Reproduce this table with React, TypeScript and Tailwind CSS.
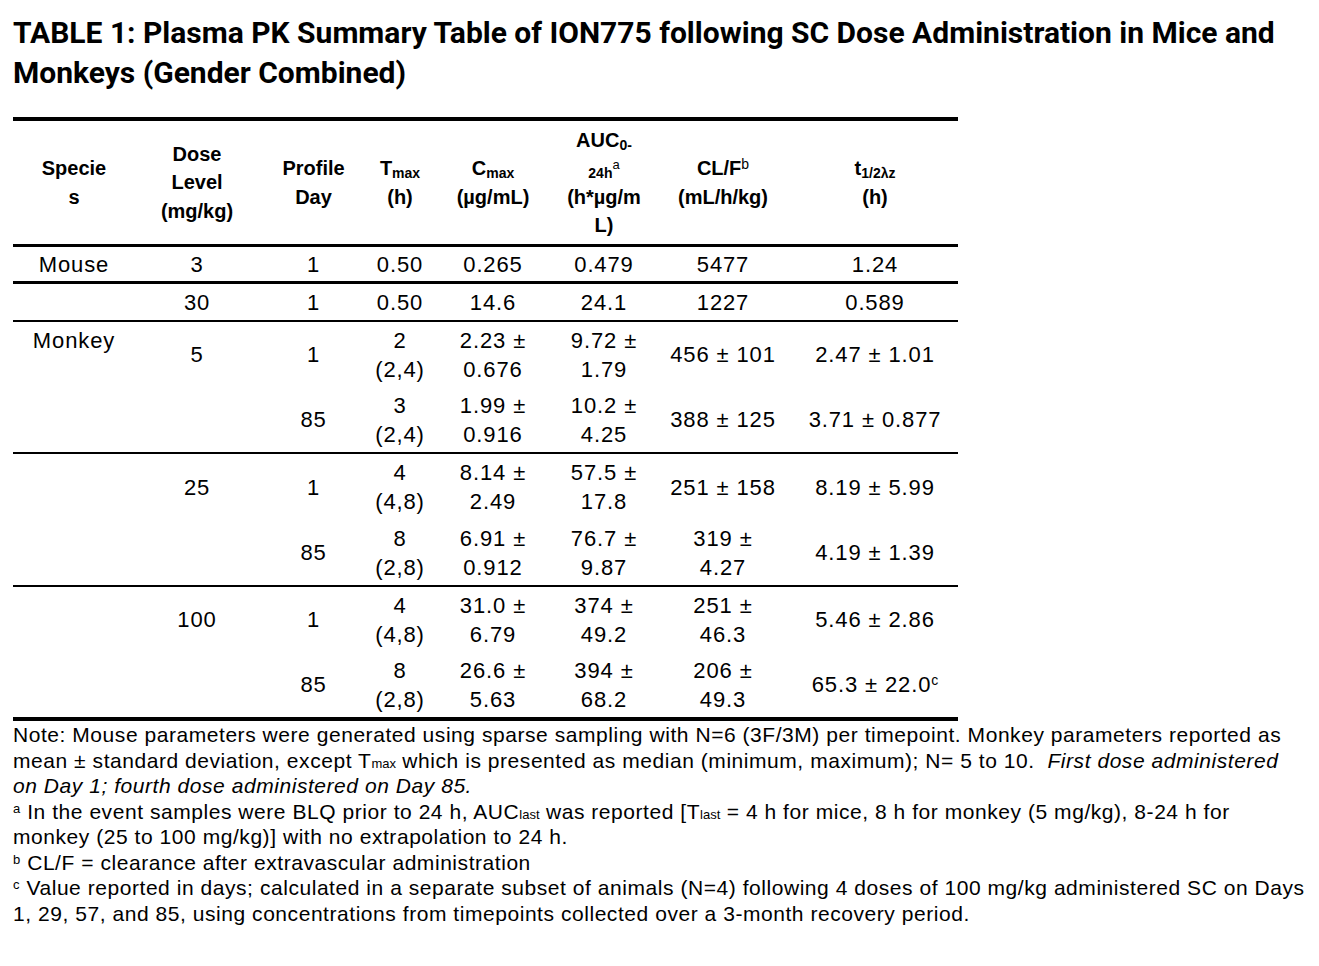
import React from "react";

const cols = "grid grid-cols-[122px_124px_109px_64px_122px_100px_138px_166px]";

type Row = {
  cells: React.ReactNode[];
  h: string;
  border: string;
  topFirst?: boolean;
};

const two = (a: string, b: string) => (
  <>
    {a}
    <br />
    {b}
  </>
);

const rows: Row[] = [
  { cells: ["Mouse", "3", "1", "0.50", "0.265", "0.479", "5477", "1.24"], h: "h-[37px]", border: "border-b-[3px]" },
  { cells: ["", "30", "1", "0.50", "14.6", "24.1", "1227", "0.589"], h: "h-[38px]", border: "border-b-2" },
  {
    cells: ["Monkey", "5", "1", two("2", "(2,4)"), two("2.23 ±", "0.676"), two("9.72 ±", "1.79"), "456 ± 101", "2.47 ± 1.01"],
    h: "h-[65px]",
    border: "",
    topFirst: true,
  },
  {
    cells: ["", "", "85", two("3", "(2,4)"), two("1.99 ±", "0.916"), two("10.2 ±", "4.25"), "388 ± 125", "3.71 ± 0.877"],
    h: "h-[67px]",
    border: "border-b-2",
  },
  {
    cells: ["", "25", "1", two("4", "(4,8)"), two("8.14 ±", "2.49"), two("57.5 ±", "17.8"), "251 ± 158", "8.19 ± 5.99"],
    h: "h-[66px]",
    border: "",
  },
  {
    cells: ["", "", "85", two("8", "(2,8)"), two("6.91 ±", "0.912"), two("76.7 ±", "9.87"), two("319 ±", "4.27"), "4.19 ± 1.39"],
    h: "h-[67px]",
    border: "border-b-2",
  },
  {
    cells: ["", "100", "1", two("4", "(4,8)"), two("31.0 ±", "6.79"), two("374 ±", "49.2"), two("251 ±", "46.3"), "5.46 ± 2.86"],
    h: "h-[65px]",
    border: "",
  },
  {
    cells: [
      "",
      "",
      "85",
      two("8", "(2,8)"),
      two("26.6 ±", "5.63"),
      two("394 ±", "68.2"),
      two("206 ±", "49.3"),
      <>
        65.3 ± 22.0<span className="relative -top-[7px] text-[14px] leading-none tracking-normal">c</span>
      </>,
    ],
    h: "h-[69px]",
    border: "border-b-4",
  },
];

const Sub = ({ children }: { children: React.ReactNode }) => (
  <span className="relative top-[3px] text-[14px] font-bold leading-none tracking-normal">{children}</span>
);

const Sm = ({ children }: { children: React.ReactNode }) => (
  <span className="text-[13px] leading-none tracking-normal">{children}</span>
);

const Sup = ({ children }: { children: React.ReactNode }) => (
  <span className="relative -top-[6px] text-[13px] leading-none">{children}</span>
);

export default function App() {
  return (
    <div className="min-h-[966px] w-[1319px] bg-white pl-[13px] pt-[13px] text-black font-['Liberation_Sans',Arial,sans-serif]">
      <h1 className="font-['Roboto',sans-serif] text-[30px] font-bold leading-[40px] whitespace-nowrap">
        <div>TABLE 1: Plasma PK Summary Table of ION775 following SC Dose Administration in Mice and</div>
        <div>Monkeys (Gender Combined)</div>
      </h1>

      <div className="mt-[24px] w-[945px] border-t-4 border-black">
        {/* header */}
        <div className={`${cols} h-[126px] border-b-[3px] border-black text-center text-[20px] font-bold leading-[28.5px]`}>
          <div className="flex items-center justify-center">
            <div>
              Specie
              <br />s
            </div>
          </div>
          <div className="flex items-center justify-center">
            <div>
              Dose
              <br />
              Level
              <br />
              (mg/kg)
            </div>
          </div>
          <div className="flex items-center justify-center">
            <div>
              Profile
              <br />
              Day
            </div>
          </div>
          <div className="flex items-center justify-center">
            <div>
              T<Sub>max</Sub>
              <br />
              (h)
            </div>
          </div>
          <div className="flex items-center justify-center">
            <div>
              C<Sub>max</Sub>
              <br />
              (µg/mL)
            </div>
          </div>
          <div className="flex items-center justify-center">
            <div>
              AUC<Sub>0-</Sub>
              <br />
              <Sub>24h</Sub>
              <span className="relative -top-[6px] text-[13px] font-normal leading-none">a</span>
              <br />
              (h*µg/m
              <br />
              L)
            </div>
          </div>
          <div className="flex items-center justify-center">
            <div>
              CL/F<span className="relative -top-[6px] text-[14px] font-normal leading-none">b</span>
              <br />
              (mL/h/kg)
            </div>
          </div>
          <div className="flex items-center justify-center">
            <div>
              t<Sub>1/2λz</Sub>
              <br />
              (h)
            </div>
          </div>
        </div>

        {/* body */}
        {rows.map((r, i) => (
          <div key={i} className={`${cols} ${r.h} ${r.border} border-black text-center text-[22px] leading-[29px] tracking-[0.04em]`}>
            {r.cells.map((c, j) => (
              <div
                key={j}
                className={
                  j === 0 && r.topFirst
                    ? "flex items-start justify-center pt-[4px]"
                    : "flex items-center justify-center"
                }
              >
                <div>{c}</div>
              </div>
            ))}
          </div>
        ))}
      </div>

      <div className="mt-[1px] whitespace-nowrap text-[21px] leading-[25.5px] tracking-[0.55px]">
        <div className="h-[25.5px]">
          Note: Mouse parameters were generated using sparse sampling with N=6 (3F/3M) per timepoint. Monkey parameters reported as
        </div>
        <div className="h-[25.5px]">
          mean ± standard deviation, except T<Sm>max</Sm> which is presented as median (minimum, maximum); N= 5 to 10.&nbsp;{" "}
          <i>First dose administered</i>
        </div>
        <div className="h-[25.5px]">
          <i>on Day 1; fourth dose administered on Day 85.</i>
        </div>
        <div className="h-[25.5px]">
          <Sup>a</Sup> In the event samples were BLQ prior to 24 h, AUC<Sm>last</Sm> was reported [T<Sm>last</Sm> = 4 h for mice, 8 h
          for monkey (5 mg/kg), 8-24 h for
        </div>
        <div className="h-[25.5px]">monkey (25 to 100 mg/kg)] with no extrapolation to 24 h.</div>
        <div className="h-[25.5px]">
          <Sup>b</Sup> CL/F = clearance after extravascular administration
        </div>
        <div className="h-[25.5px]">
          <Sup>c</Sup> Value reported in days; calculated in a separate subset of animals (N=4) following 4 doses of 100 mg/kg
          administered SC on Days
        </div>
        <div className="h-[25.5px]">1, 29, 57, and 85, using concentrations from timepoints collected over a 3-month recovery period.</div>
      </div>
    </div>
  );
}
